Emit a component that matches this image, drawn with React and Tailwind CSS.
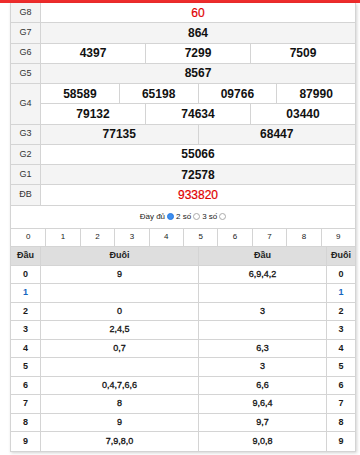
const prizes = [
  { label: "G8", rows: [["60"]], red: true },
  { label: "G7", rows: [["864"]] },
  { label: "G6", rows: [["4397", "7299", "7509"]] },
  { label: "G5", rows: [["8567"]] },
  { label: "G4", rows: [["58589", "65198", "09766", "87990"], ["79132", "74634", "03440"]] },
  { label: "G3", rows: [["77135", "68447"]] },
  { label: "G2", rows: [["55066"]] },
  { label: "G1", rows: [["72578"]] },
  { label: "ĐB", rows: [["933820"]], red: true },
];

const loto = [
  ["0", "9", "6,9,4,2"],
  ["1", "", ""],
  ["2", "0", "3"],
  ["3", "2,4,5", ""],
  ["4", "0,7", "6,3"],
  ["5", "", "3"],
  ["6", "0,4,7,6,6", "6,6"],
  ["7", "8", "9,6,4"],
  ["8", "9", "9,7"],
  ["9", "7,9,8,0", "9,0,8"],
];

function PrizeRow({ p, i }) {
  const bg = i % 2 === 1 ? "bg-[#f4f4f4]" : "bg-white";
  return (
    <div className={`flex border-b border-[#d4d4d4] ${bg}`}>
      <div className="w-[30px] shrink-0 flex items-center justify-center border-r border-[#d4d4d4] bg-[#f4f4f4] text-[9px] text-[#333]">
        {p.label}
      </div>
      <div className="flex-1 flex flex-col">
        {p.rows.map((r, ri) => (
          <div key={ri} className={`flex ${ri > 0 ? "h-[20.25px] border-t border-[#d4d4d4]" : "h-[19.25px]"}`}>
            {r.map((n, ni) => (
              <div
                key={ni}
                className={`flex-1 flex items-center justify-center text-[12px] ${ni > 0 ? "border-l border-[#d4d4d4]" : ""} ${p.red ? "text-[#e00000] [-webkit-text-stroke:0.2px_#e00000]" : "font-bold text-[#111]"}`}
              >
                {n}
              </div>
            ))}
          </div>
        ))}
      </div>
    </div>
  );
}

export default function App() {
  return (
    <div className="w-[360px] h-[455px] bg-white overflow-hidden" style={{ fontFamily: '"Liberation Sans", Arial, sans-serif' }}>
      <div className="h-[3px] bg-[#ee2c2c]" />
      <div className="ml-[10px] w-[346px] border-x border-b border-[#d4d4d4] shadow-[1px_1px_3px_rgba(0,0,0,0.18)]">
        {prizes.map((p, i) => (
          <PrizeRow key={p.label} p={p} i={i} />
        ))}
        <div className="h-[23px] flex items-center justify-center gap-[2px] text-[8px] text-[#222] border-b border-[#d4d4d4]">
          <span>Đầy đủ</span>
          <span className="w-[7px] h-[7px] rounded-full bg-[#3d8ef0] border border-[#2a7ae0]" />
          <span>2 số</span>
          <span className="w-[7px] h-[7px] rounded-full border border-[#aaa] bg-white" />
          <span>3 số</span>
          <span className="w-[7px] h-[7px] rounded-full border border-[#aaa] bg-white" />
        </div>
        <div className="grid grid-cols-10 h-[18px] border-b border-[#d4d4d4]">
          {["0", "1", "2", "3", "4", "5", "6", "7", "8", "9"].map((d, i) => (
            <div key={d} className={`flex items-center justify-center text-[8px] text-[#222] ${i > 0 ? "border-l border-[#d4d4d4]" : ""}`}>
              {d}
            </div>
          ))}
        </div>
        <div className="flex h-[19px] bg-[#dedede] border-b border-[#d4d4d4] text-[9px] font-bold text-[#222]">
          <div className="w-[30px] flex items-center justify-center border-r border-[#d4d4d4]">Đầu</div>
          <div className="w-[158px] flex items-center justify-center border-r border-[#d4d4d4]">Đuôi</div>
          <div className="w-[128px] flex items-center justify-center border-r border-[#d4d4d4]">Đầu</div>
          <div className="flex-1 flex items-center justify-center">Đuôi</div>
        </div>
        {loto.map((r, i) => (
          <div key={r[0]} className={`flex h-[18.5px] text-[9px] font-bold text-[#1a1a1a] ${i < 9 ? "border-b border-[#d4d4d4]" : ""}`}>
            <div className={`w-[30px] flex items-center justify-center border-r border-[#d4d4d4] ${r[0] === "1" ? "text-[#1565c0]" : ""}`}>{r[0]}</div>
            <div className="w-[158px] flex items-center justify-center border-r border-[#d4d4d4] font-normal text-[#111] [-webkit-text-stroke:0.3px_#111]">{r[1]}</div>
            <div className="w-[128px] flex items-center justify-center border-r border-[#d4d4d4] font-normal text-[#111] [-webkit-text-stroke:0.3px_#111]">{r[2]}</div>
            <div className={`flex-1 flex items-center justify-center ${r[0] === "1" ? "text-[#1565c0]" : ""}`}>{r[0]}</div>
          </div>
        ))}
      </div>
    </div>
  );
}
